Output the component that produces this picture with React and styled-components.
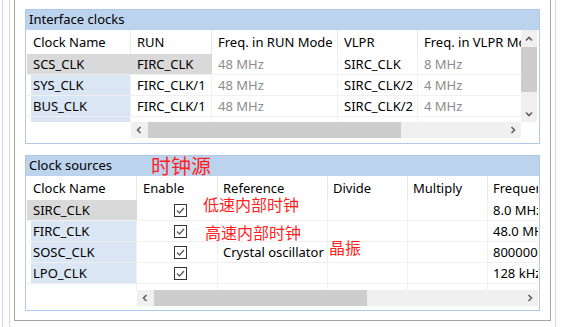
import styled, { createGlobalStyle } from "styled-components";

const GlobalStyle = createGlobalStyle`
  body {
    margin: 0;
    background: #ffffff;
    font-family: "Noto Sans", "Noto Sans CJK SC", sans-serif;
    font-size: 13px;
    color: #000000;
  }
`;

const Page = styled.div`
  width: 563px;
  height: 327px;
  overflow: hidden;
  padding-left: 2px;
  box-sizing: border-box;
  background: #ffffff;
`;

const OuterRail = styled.div`
  width: 554px;
  height: 100%;
  box-sizing: border-box;
  border-left: 1px solid #c6d9f0;
  border-right: 1px solid #c6d9f0;
  padding: 0 4px 0 6px;
`;

const InnerRail = styled.div`
  height: 100%;
  box-sizing: border-box;
  border-left: 1px solid #c6d9f0;
  padding-left: 4px;
`;

const Frame = styled.div`
  width: 537px;
  height: 321px;
  box-sizing: border-box;
  border: 1px solid #a5a5a5;
  border-top: none;
  padding: 9px 10px 0;
  display: flex;
  flex-direction: column;
  gap: 11px;
`;

const Panel = styled.div`
  position: relative;
  height: ${(p) => p.$height}px;
  box-sizing: border-box;
  border: 1px solid #b0c9e8;
  background: #ffffff;
  display: flex;
  flex-direction: column;
`;

const PanelHeader = styled.div`
  flex: none;
  height: 20px;
  line-height: 18px;
  padding-left: 3px;
  background: #bcd3ed;
`;

const Body = styled.div`
  flex: none;
  display: flex;
  height: ${(p) => p.$height}px;
`;

const Viewport = styled.div`
  width: ${(p) => p.$width}px;
  height: 100%;
  overflow: hidden;
  padding-left: 1px;
  box-sizing: border-box;
`;

const Row = styled.div`
  display: flex;
  height: ${(p) => (p.$head ? 24 : 21)}px;
  box-sizing: border-box;
  border-bottom: ${(p) => (p.$head ? "none" : "1px solid #f0f0f0")};
`;

const Cell = styled.div`
  flex: none;
  width: ${(p) => p.$w}px;
  box-sizing: border-box;
  padding-left: ${(p) => p.$pad ?? 6}px;
  display: flex;
  align-items: center;
  line-height: ${(p) => (p.$head ? 24 : 20)}px;
  white-space: nowrap;
  overflow: hidden;
  color: ${(p) => (p.$muted ? "#8c8c8c" : "#000000")};
  border-right: 1px solid
    ${(p) => (p.$tone === "gray" ? "#d9d9d9" : p.$head ? "#e8e8e8" : "#f0f0f0")};
  background: ${(p) =>
    p.$tone === "gray"
      ? "#d9d9d9"
      : p.$tone === "blue"
      ? "linear-gradient(to right, transparent 4px, #dae6f3 4px)"
      : "transparent"};
`;

const Bottom = styled.div`
  flex: none;
  display: flex;
  height: 16px;
  padding-left: ${(p) => p.$offset}px;
`;

const HTrack = styled.div`
  display: flex;
  width: ${(p) => p.$width}px;
  height: 16px;
  background: #f0f0f0;
`;

const ArrowBtn = styled.div`
  flex: none;
  width: ${(p) => (p.$vertical ? 16 : p.$size)}px;
  height: ${(p) => (p.$vertical ? p.$size : 16)}px;
  display: flex;
  align-items: center;
  justify-content: center;
`;

const Lane = styled.div`
  flex: 1;
  display: flex;
  flex-direction: ${(p) => (p.$vertical ? "column" : "row")};
`;

const Thumb = styled.div`
  flex: none;
  background: #cdcdcd;
  ${(p) =>
    p.$vertical
      ? `width: 16px; height: ${p.$len}px; margin-top: ${p.$start}px;`
      : `height: 16px; width: ${p.$len}px; margin-left: ${p.$start}px;`}
`;

const VTrack = styled.div`
  flex: none;
  width: 16px;
  height: 100%;
  display: flex;
  flex-direction: column;
  background: #f0f0f0;
`;

const Box = styled.span`
  width: 13px;
  height: 13px;
  box-sizing: border-box;
  border: 1px solid #333333;
  background: #ffffff;
  display: flex;
`;

const Note = styled.span`
  position: absolute;
  left: ${(p) => p.$x}px;
  top: ${(p) => p.$y}px;
  font-family: "Noto Sans CJK SC", sans-serif;
  font-size: ${(p) => p.$size}px;
  line-height: ${(p) => p.$size}px;
  color: #ff1f1f;
  white-space: nowrap;
`;

const rotations = { left: 0, up: 90, right: 180, down: 270 };

const Chevron = ({ dir }) => (
  <svg
    width="8"
    height="8"
    viewBox="0 0 8 8"
    style={{ transform: `rotate(${rotations[dir]}deg)` }}
  >
    <polyline
      points="5.5,1 2.5,4 5.5,7"
      fill="none"
      stroke="#606060"
      strokeWidth="1.6"
    />
  </svg>
);

const HScroll = ({ offset, width, start, len }) => (
  <Bottom $offset={offset}>
    <HTrack $width={width}>
      <ArrowBtn $size={16}>
        <Chevron dir="left" />
      </ArrowBtn>
      <Lane>
        <Thumb $start={start} $len={len} />
      </Lane>
      <ArrowBtn $size={16}>
        <Chevron dir="right" />
      </ArrowBtn>
    </HTrack>
  </Bottom>
);

const VScroll = () => (
  <VTrack>
    <ArrowBtn $vertical $size={17}>
      <Chevron dir="up" />
    </ArrowBtn>
    <Lane $vertical>
      <Thumb $vertical $start={0} $len={45} />
    </Lane>
    <ArrowBtn $vertical $size={17}>
      <Chevron dir="down" />
    </ArrowBtn>
  </VTrack>
);

const Check = () => (
  <Box>
    <svg width="11" height="11" viewBox="0 0 11 11">
      <polyline
        points="2,5.5 4.5,8 9,3"
        fill="none"
        stroke="#5a5a5a"
        strokeWidth="1.3"
      />
    </svg>
  </Box>
);

const ifaceCols = [104, 81, 126, 80, 110];
const ifaceHead = ["Clock Name", "RUN", "Freq. in RUN Mode", "VLPR", "Freq. in VLPR Mode"];
const ifaceRows = [
  ["SCS_CLK", "FIRC_CLK", "48 MHz", "SIRC_CLK", "8 MHz"],
  ["SYS_CLK", "FIRC_CLK/1", "48 MHz", "SIRC_CLK/2", "4 MHz"],
  ["BUS_CLK", "FIRC_CLK/1", "48 MHz", "SIRC_CLK/2", "4 MHz"],
  ["FLASH_CLK", "FIRC_CLK/2", "24 MHz", "SIRC_CLK/4", "1 MHz"],
];

const srcCols = [110, 81, 110, 80, 80, 80];
const srcHead = ["Clock Name", "Enable", "Reference", "Divide", "Multiply", "Frequency"];
const srcRows = [
  ["SIRC_CLK", "", "", "", "8.0 MHz"],
  ["FIRC_CLK", "", "", "", "48.0 MHz"],
  ["SOSC_CLK", "Crystal oscillator", "", "", "8000000 Hz"],
  ["LPO_CLK", "", "", "", "128 kHz"],
];

const InterfacePanel = () => (
  <Panel $height={135}>
    <PanelHeader>Interface clocks</PanelHeader>
    <Body $height={92}>
      <Viewport $width={495}>
        <Row $head>
          {ifaceHead.map((h, i) => (
            <Cell key={i} $head $w={ifaceCols[i]}>
              {h}
            </Cell>
          ))}
        </Row>
        {ifaceRows.map((r, ri) => (
          <Row key={ri}>
            {r.map((v, i) => (
              <Cell
                key={i}
                $w={ifaceCols[i]}
                $muted={i === 2 || i === 4}
                $tone={ri === 0 && i < 2 ? "gray" : i === 0 ? "blue" : undefined}
              >
                {v}
              </Cell>
            ))}
          </Row>
        ))}
      </Viewport>
      <VScroll />
    </Body>
    <HScroll offset={105} width={390} start={1} len={253} />
  </Panel>
);

const SourcePanel = () => (
  <Panel $height={156}>
    <PanelHeader>Clock sources</PanelHeader>
    <Body $height={114}>
      <Viewport $width={512}>
        <Row $head>
          {srcHead.map((h, i) => (
            <Cell key={i} $head $w={srcCols[i]} $pad={i > 1 ? 5 : 6}>
              {h}
            </Cell>
          ))}
        </Row>
        {srcRows.map((r, ri) => (
          <Row key={ri}>
            <Cell $w={srcCols[0]} $tone={ri === 0 ? "gray" : "blue"}>
              {r[0]}
            </Cell>
            <Cell $w={srcCols[1]} $pad={37}>
              <Check />
            </Cell>
            {r.slice(1).map((v, i) => (
              <Cell key={i} $w={srcCols[i + 2]} $pad={5}>
                {v}
              </Cell>
            ))}
          </Row>
        ))}
        <Row>
          {srcCols.map((w, i) => (
            <Cell key={i} $w={w} />
          ))}
        </Row>
      </Viewport>
    </Body>
    <HScroll offset={111} width={401} start={1} len={213} />
    <Note $x={125} $y={0} $size={20}>时钟源</Note>
    <Note $x={177} $y={40} $size={16}>低速内部时钟</Note>
    <Note $x={179} $y={68} $size={16}>高速内部时钟</Note>
    <Note $x={303} $y={83} $size={16}>晶振</Note>
  </Panel>
);

export default function App() {
  return (
    <Page>
      <GlobalStyle />
      <OuterRail>
        <InnerRail>
          <Frame>
            <InterfacePanel />
            <SourcePanel />
          </Frame>
        </InnerRail>
      </OuterRail>
    </Page>
  );
}
